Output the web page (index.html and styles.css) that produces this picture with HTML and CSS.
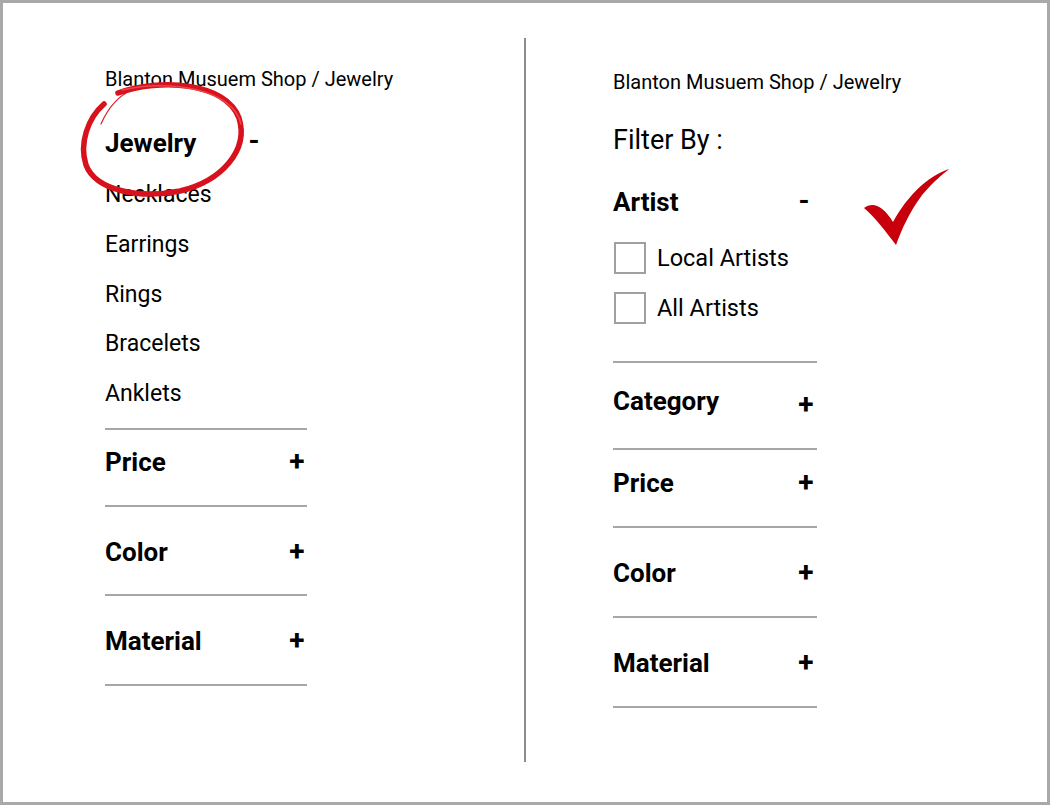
FILE: index.html
```html
<!DOCTYPE html>
<html lang="en">
<head>
    <meta charset="UTF-8">
    <title>Blanton Musuem Shop - Jewelry filters</title>
    <link rel="stylesheet" href="styles.css">
</head>
<body>
    <div class="frame">
        <div class="columns">
            <section class="panel panel-left">
                <p class="crumb">Blanton Musuem Shop / Jewelry</p>
                <div class="cat-head">
                    <h2>Jewelry</h2>
                    <span class="dash">-</span>
                </div>
                <ul class="sub-list">
                    <li>Necklaces</li>
                    <li>Earrings</li>
                    <li>Rings</li>
                    <li>Bracelets</li>
                    <li>Anklets</li>
                </ul>
                <div class="acc-group acc-left">
                    <div class="acc acc-tight"><h3>Price</h3><span class="toggle">+</span></div>
                    <div class="acc acc-short"><h3>Color</h3><span class="toggle">+</span></div>
                    <div class="acc"><h3>Material</h3><span class="toggle">+</span></div>
                </div>
            </section>

            <section class="panel panel-right">
                <p class="crumb">Blanton Musuem Shop / Jewelry</p>
                <p class="filter-by">Filter By :</p>
                <div class="artist-head">
                    <h3>Artist</h3>
                    <span class="toggle">-</span>
                </div>
                <ul class="options">
                    <li><span class="box"></span>Local Artists</li>
                    <li><span class="box"></span>All Artists</li>
                </ul>
                <div class="acc-group acc-right">
                    <div class="acc acc-category"><h3>Category</h3><span class="toggle toggle-low">+</span></div>
                    <div class="acc acc-price"><h3>Price</h3><span class="toggle">+</span></div>
                    <div class="acc"><h3>Color</h3><span class="toggle">+</span></div>
                    <div class="acc"><h3>Material</h3><span class="toggle">+</span></div>
                </div>
            </section>
        </div>

        <!-- hand-drawn annotations over the mockups -->
        <svg class="marks" viewBox="0 0 1050 805" width="1050" height="805">
            <path d="M101,124 C108,108 118,96 132,90" fill="none" stroke="#e01b24" stroke-width="1.2" stroke-linecap="round"/>
            <path d="M118,93 C160,78 226,82 239,118 C249,150 222,181 180,191 C140,199 96,191 86,165 C79,143 88,118 104,104" fill="none" stroke="#d8121c" stroke-width="5.5" stroke-linecap="round"/>
            <path d="M122,90 C170,79 233,89 241,124" fill="none" stroke="#e8454b" stroke-width="1.5" stroke-linecap="round"/>
            <path d="M864,208 C872,202 882,204 893,222 C908,195 928,176 949,169 C946,172 932,182 920,198 C910,212 902,228 896,245 C886,232 876,218 864,208 Z" fill="#c8000c"/>
        </svg>
    </div>
</body>
</html>
```

FILE: styles.css
```css
* { box-sizing: border-box; }
body { margin: 0; font-family: Roboto, "Liberation Sans", sans-serif; color: #000; background: #fff; }
h2, h3, p, ul { margin: 0; padding: 0; }
ul { list-style: none; }

.frame { position: relative; width: 1050px; height: 805px; border: 3px solid #a9a9a9; background: #fff; }
.columns { display: flex; height: 724px; margin-top: 35px; }
.panel { height: 100%; }
.panel-left { width: 521px; padding-left: 102px; }
.panel-right { flex: 1; padding-left: 87px; border-left: 2px solid #8c8c8c; }

.crumb { font-size: 20px; line-height: 24px; white-space: nowrap; }
.panel-left .crumb { margin-top: 29px; }
.panel-right .crumb { margin-top: 32px; }

.cat-head { display: flex; align-items: center; margin-top: 32px; line-height: 40px; }
.cat-head h2 { font-size: 26px; font-weight: 700; }
.cat-head .dash { font-size: 28px; font-weight: 700; margin-left: 52px; margin-top: -4px; }

.sub-list { margin-top: 7px; margin-bottom: 9px; }
.sub-list li { font-size: 23px; line-height: 49.75px; }

.acc-group { border-bottom: 2px solid #a6a6a6; }
.acc-left { width: 202px; }
.acc-right { width: 204px; margin-top: 28px; }
.acc { display: flex; justify-content: space-between; align-items: center; border-top: 2px solid #a6a6a6; padding: 30px 0 28px; line-height: 30px; }
.acc h3 { font-size: 26px; font-weight: 700; }
.acc-tight { padding-top: 17px; }
.acc-short { padding-bottom: 27px; }
.acc-category { padding: 23px 0 32px; }
.acc-price { padding-top: 18px; }

.toggle { width: 20px; text-align: center; font-size: 28px; font-weight: 700; }
.acc-right .toggle { margin-right: 1px; }
.toggle-low { transform: translateY(4px); }

.filter-by { margin-top: 30px; font-size: 27px; line-height: 32px; }

.artist-head { display: flex; justify-content: space-between; align-items: center; width: 204px; margin-top: 31px; line-height: 30px; }
.artist-head h3 { font-size: 26px; font-weight: 700; }
.artist-head .toggle { margin-right: 3px; margin-top: -2px; }

.options { margin-top: 16px; }
.options li { display: flex; align-items: center; height: 50px; font-size: 23.5px; }
.box { width: 32px; height: 32px; border: 2.5px solid #a0a0a0; margin-left: 1px; margin-right: 11px; background: #fff; }

.marks { position: absolute; left: -3px; top: -3px; pointer-events: none; }
```
